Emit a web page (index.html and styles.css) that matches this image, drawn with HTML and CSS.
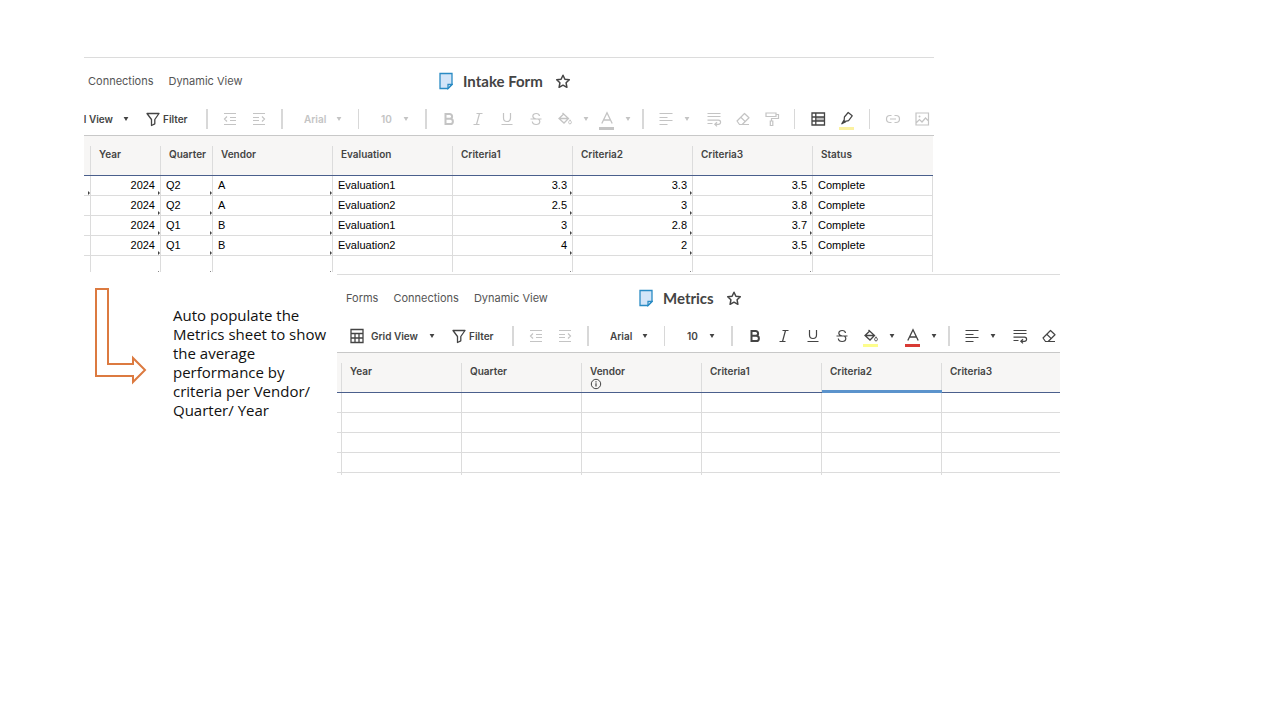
FILE: index.html
```html
<!DOCTYPE html>
<html lang="en">
<head>
<meta charset="utf-8">
<title>Intake Form and Metrics</title>
<link rel="stylesheet" href="styles.css">
</head>
<body>
<svg class="sprite" aria-hidden="true">
  <defs>
    <symbol id="caret" viewBox="0 0 6 5"><path d="M0 0h6L3 5z" fill="currentColor"/></symbol>
    <symbol id="sheet" viewBox="0 0 14 18"><path d="M1 1.500h12v11L9 16.500H1z" fill="#d3e5f8" stroke="#2a8bc4" stroke-width="1.300"/><path d="M13 12.500H9v4z" fill="#fff" stroke="#2a8bc4" stroke-width="1.300"/></symbol>
    <symbol id="star" viewBox="0 0 16 16"><path d="M8 2.200l1.900 4 4.400.6-3.200 3 .8 4.500L8 12.200l-3.900 2.100.8-4.500-3.200-3 4.400-.6z" fill="none" stroke="currentColor" stroke-width="1.500" stroke-linejoin="round"/></symbol>
    <symbol id="grid" viewBox="0 0 16 16"><path d="M2 1.500h12v13H2zM2 5.500h12M2 10h12M6 5.500v9M10 5.500v9" fill="none" stroke="currentColor" stroke-width="1.300"/></symbol>
    <symbol id="filter" viewBox="0 0 16 16"><path d="M2 2.500h12L9.800 8.500v4.300L6.500 14.500v-6z" fill="none" stroke="currentColor" stroke-width="1.300" stroke-linejoin="round"/></symbol>
    <symbol id="outdent" viewBox="0 0 16 16"><path d="M2 2.500h12M8 6.500h6M8 9.500h6M2 13.500h12M5 5.500L2.500 8 5 10.500" fill="none" stroke="currentColor" stroke-width="1.200"/></symbol>
    <symbol id="indent" viewBox="0 0 16 16"><path d="M2 2.500h12M2 6.500h6M2 9.500h6M2 13.500h12M11 5.500L13.500 8 11 10.500" fill="none" stroke="currentColor" stroke-width="1.200"/></symbol>
    <symbol id="bold" viewBox="0 0 16 16"><path d="M4.500 3h4.200a2.300 2.300 0 0 1 0 4.800H4.500zM4.500 7.800h4.800a2.600 2.600 0 0 1 0 5.200H4.500z" fill="none" stroke="currentColor" stroke-width="2"/></symbol>
    <symbol id="italic" viewBox="0 0 16 16"><path d="M6.500 2.500h6M3.500 13.500h6M9.500 2.500l-3 11" fill="none" stroke="currentColor" stroke-width="1.200"/></symbol>
    <symbol id="underline" viewBox="0 0 16 16"><path d="M4.500 2v5a3.500 3.500 0 0 0 7 0V2M2.500 13.500h11" fill="none" stroke="currentColor" stroke-width="1.200"/></symbol>
    <symbol id="strike" viewBox="0 0 16 16"><path d="M11.500 5C11.300 3.400 10 2.500 8.200 2.500 6.200 2.500 4.800 3.500 4.800 5.200c0 1.600 1.400 2.300 3.200 2.800M2.500 8h11M4.300 10.500c.2 1.900 1.700 3 3.800 3 2.200 0 3.700-1 3.700-2.900 0-1-.4-1.800-1.300-2.400" fill="none" stroke="currentColor" stroke-width="1.200"/></symbol>
    <symbol id="fill" viewBox="0 0 16 16"><path d="M5.500 2l6 5.500L7 12 2 7.500l4.500-4.300M2.300 7.500h9" fill="none" stroke="currentColor" stroke-width="1.300"/><path d="M13 8.800c2 2.600 1.700 4 0 4s-2-1.400 0-4z" fill="none" stroke="currentColor"/></symbol>
    <symbol id="textcolor" viewBox="0 0 16 16"><path d="M2.800 12.500L8 1.800l5.200 10.700M4.500 9h7" fill="none" stroke="currentColor" stroke-width="1.300"/></symbol>
    <symbol id="align" viewBox="0 0 16 16"><path d="M1.500 2.500h13M1.500 6.500h8M1.500 9.500h13M1.500 13.500h8" fill="none" stroke="currentColor" stroke-width="1.200"/></symbol>
    <symbol id="wrap" viewBox="0 0 16 16"><path d="M1.500 2.500h13M1.500 5.500h13M1.500 9.200h11a2 2 0 0 1 0 4.200H9M1.500 12.500h5M11 11.200L8.800 13.300 11 15.400" fill="none" stroke="currentColor" stroke-width="1.200"/></symbol>
    <symbol id="eraser" viewBox="0 0 16 16"><path d="M2 10l7.500-7.500 4.500 4.300-6.800 6.700H4.500zM5.800 6.300l4.500 4.300M4 13.500h10" fill="none" stroke="currentColor" stroke-width="1.200" stroke-linejoin="round"/></symbol>
    <symbol id="painter" viewBox="0 0 16 16"><path d="M2 2h10v3.500H2zM12 3.500h2.500v4H7.500V10M6.300 10h2.500v4.500H6.300z" fill="none" stroke="currentColor" stroke-width="1.200"/></symbol>
    <symbol id="rows" viewBox="0 0 16 16"><path d="M6 6h8v4H6z" fill="currentColor" opacity=".35"/><path d="M2 2h12.500v12H2zM2 6h12.500M2 10h12.500M5.800 2v12" fill="none" stroke="currentColor" stroke-width="1.300"/></symbol>
    <symbol id="marker" viewBox="0 0 16 16"><path d="M9.200 1.500l4 3.300-3.600 4.900-4.500 1 .300-4.700zM5.300 10.700L3 12.800M5.300 8.500L2.800 12.800l4-2" fill="none" stroke="currentColor" stroke-width="1.200" stroke-linejoin="round"/></symbol>
    <symbol id="link" viewBox="0 0 16 16"><path d="M6.500 4.500H5a3.500 3.500 0 0 0 0 7h1.500M9.500 4.500H11a3.500 3.500 0 0 1 0 7H9.500M5 8h6" fill="none" stroke="currentColor" stroke-width="1.200"/></symbol>
    <symbol id="image" viewBox="0 0 16 16"><path d="M2 2h12.500v12H2zM2 12l3.500-3.500L8 11l3.500-4 3 3" fill="none" stroke="currentColor" stroke-width="1.200"/><circle cx="5.500" cy="5.500" r="1" fill="currentColor"/></symbol>
    <symbol id="info" viewBox="0 0 12 12"><circle cx="6" cy="6" r="4.700" fill="none" stroke="currentColor"/><path d="M6 5.300v3.200M6 3.200v1.200" stroke="currentColor" stroke-width="1.200"/></symbol>
  </defs>
</svg>

<main class="slide">
  <section class="panel intake">
    <header class="menu">
      <nav class="tabs"><a href="#">Connections</a><a href="#">Dynamic View</a></nav>
      <h1 class="title"><svg class="sheet"><use href="#sheet"/></svg>Intake Form</h1>
      <button class="star" aria-label="Favorite"><svg class="icon"><use href="#star"/></svg></button>
    </header>
    <div class="toolbar off">
      <button class="view on"><span>l View</span><svg class="caret"><use href="#caret"/></svg></button>
      <button class="filter on"><svg class="icon"><use href="#filter"/></svg>Filter</button>
      <i class="rule thick"></i>
      <button class="tool" aria-label="Outdent"><svg class="icon"><use href="#outdent"/></svg></button>
      <button class="tool" aria-label="Indent"><svg class="icon"><use href="#indent"/></svg></button>
      <i class="rule thick"></i>
      <div class="picker font"><select aria-label="Font"><option>Arial</option></select><svg class="caret"><use href="#caret"/></svg></div>
      <i class="rule"></i>
      <div class="picker size"><select aria-label="Size"><option>10</option></select><svg class="caret"><use href="#caret"/></svg></div>
      <i class="rule thick"></i>
      <button class="tool" aria-label="Bold"><svg class="icon"><use href="#bold"/></svg></button>
      <button class="tool" aria-label="Italic"><svg class="icon"><use href="#italic"/></svg></button>
      <button class="tool" aria-label="Underline"><svg class="icon"><use href="#underline"/></svg></button>
      <button class="tool" aria-label="Strikethrough"><svg class="icon"><use href="#strike"/></svg></button>
      <button class="tool" aria-label="Fill color"><svg class="icon"><use href="#fill"/></svg></button>
      <button class="more" aria-label="Fill colors"><svg class="caret"><use href="#caret"/></svg></button>
      <button class="tool swatch grey" aria-label="Text color"><svg class="icon"><use href="#textcolor"/></svg></button>
      <button class="more" aria-label="Text colors"><svg class="caret"><use href="#caret"/></svg></button>
      <i class="rule thick"></i>
      <button class="tool" aria-label="Align"><svg class="icon"><use href="#align"/></svg></button>
      <button class="more wide" aria-label="Alignments"><svg class="caret"><use href="#caret"/></svg></button>
      <button class="tool" aria-label="Wrap text"><svg class="icon"><use href="#wrap"/></svg></button>
      <button class="tool" aria-label="Clear format"><svg class="icon"><use href="#eraser"/></svg></button>
      <button class="tool" aria-label="Format painter"><svg class="icon"><use href="#painter"/></svg></button>
      <i class="rule"></i>
      <button class="tool on" aria-label="Conditional formatting"><svg class="icon"><use href="#rows"/></svg></button>
      <button class="tool on swatch pale" aria-label="Highlight changes"><svg class="icon"><use href="#marker"/></svg></button>
      <i class="rule"></i>
      <button class="tool" aria-label="Link"><svg class="icon"><use href="#link"/></svg></button>
      <button class="tool" aria-label="Image"><svg class="icon"><use href="#image"/></svg></button>
    </div>
    <div class="sheetarea">
      <table class="grid-intake">
        <colgroup><col class="c-gutter"><col class="c-year"><col class="c-quarter"><col><col><col><col><col><col></colgroup>
        <thead><tr><th></th><th>Year</th><th>Quarter</th><th>Vendor</th><th>Evaluation</th><th>Criteria1</th><th>Criteria2</th><th>Criteria3</th><th class="last">Status</th></tr></thead>
        <tbody>
          <tr><td class="mark"></td><td class="num mark">2024</td><td class="mark">Q2</td><td class="mark">A</td><td>Evaluation1</td><td class="num mark">3.3</td><td class="num mark">3.3</td><td class="num mark">3.5</td><td>Complete</td></tr>
          <tr><td></td><td class="num mark">2024</td><td class="mark">Q2</td><td class="mark">A</td><td>Evaluation2</td><td class="num mark">2.5</td><td class="num mark">3</td><td class="num mark">3.8</td><td>Complete</td></tr>
          <tr><td></td><td class="num mark">2024</td><td class="mark">Q1</td><td class="mark">B</td><td>Evaluation1</td><td class="num mark">3</td><td class="num mark">2.8</td><td class="num mark">3.7</td><td>Complete</td></tr>
          <tr><td></td><td class="num mark">2024</td><td class="mark">Q1</td><td class="mark">B</td><td>Evaluation2</td><td class="num mark">4</td><td class="num mark">2</td><td class="num mark">3.5</td><td>Complete</td></tr>
          <tr class="cut"><td></td><td class="dot"></td><td class="dot"></td><td class="dot"></td><td></td><td class="dot"></td><td class="dot"></td><td class="dot"></td><td></td></tr>
        </tbody>
      </table>
    </div>
  </section>

  <div class="lower">
    <svg class="arrow" viewBox="0 0 54 98" aria-hidden="true"><path d="M2 2h12v75h25v-6l12 12-12 12v-6H2z"/></svg>
    <p class="note">Auto populate the Metrics sheet to show the average performance by criteria per Vendor/ Quarter/ Year</p>
    <section class="panel metrics">
      <header class="menu">
        <nav class="tabs"><a href="#">Forms</a><a href="#">Connections</a><a href="#">Dynamic View</a></nav>
        <h1 class="title"><svg class="sheet"><use href="#sheet"/></svg>Metrics</h1>
        <button class="star" aria-label="Favorite"><svg class="icon"><use href="#star"/></svg></button>
      </header>
      <div class="toolbar">
        <button class="view"><svg class="icon"><use href="#grid"/></svg><span>Grid View</span><svg class="caret"><use href="#caret"/></svg></button>
        <button class="filter"><svg class="icon"><use href="#filter"/></svg>Filter</button>
        <i class="rule thick"></i>
        <button class="tool dim" aria-label="Outdent"><svg class="icon"><use href="#outdent"/></svg></button>
        <button class="tool dim" aria-label="Indent"><svg class="icon"><use href="#indent"/></svg></button>
        <i class="rule thick"></i>
        <div class="picker font"><select aria-label="Font"><option>Arial</option></select><svg class="caret"><use href="#caret"/></svg></div>
        <i class="rule"></i>
        <div class="picker size"><select aria-label="Size"><option>10</option></select><svg class="caret"><use href="#caret"/></svg></div>
        <i class="rule thick"></i>
        <button class="tool" aria-label="Bold"><svg class="icon"><use href="#bold"/></svg></button>
        <button class="tool" aria-label="Italic"><svg class="icon"><use href="#italic"/></svg></button>
        <button class="tool" aria-label="Underline"><svg class="icon"><use href="#underline"/></svg></button>
        <button class="tool" aria-label="Strikethrough"><svg class="icon"><use href="#strike"/></svg></button>
        <button class="tool swatch yellow" aria-label="Fill color"><svg class="icon"><use href="#fill"/></svg></button>
        <button class="more" aria-label="Fill colors"><svg class="caret"><use href="#caret"/></svg></button>
        <button class="tool swatch red" aria-label="Text color"><svg class="icon"><use href="#textcolor"/></svg></button>
        <button class="more" aria-label="Text colors"><svg class="caret"><use href="#caret"/></svg></button>
        <i class="rule thick"></i>
        <button class="tool" aria-label="Align"><svg class="icon"><use href="#align"/></svg></button>
        <button class="more wide" aria-label="Alignments"><svg class="caret"><use href="#caret"/></svg></button>
        <button class="tool" aria-label="Wrap text"><svg class="icon"><use href="#wrap"/></svg></button>
        <button class="tool" aria-label="Clear format"><svg class="icon"><use href="#eraser"/></svg></button>
      </div>
      <div class="sheetarea">
        <table class="grid-metrics">
          <colgroup><col class="c-gutter"><col><col><col><col><col><col></colgroup>
          <thead><tr><th></th><th>Year</th><th>Quarter</th><th>Vendor<svg class="info"><use href="#info"/></svg></th><th>Criteria1</th><th class="selected">Criteria2</th><th class="last">Criteria3</th></tr></thead>
          <tbody>
            <tr><td></td><td></td><td></td><td></td><td></td><td></td><td></td></tr>
            <tr><td></td><td></td><td></td><td></td><td></td><td></td><td></td></tr>
            <tr><td></td><td></td><td></td><td></td><td></td><td></td><td></td></tr>
            <tr><td></td><td></td><td></td><td></td><td></td><td></td><td></td></tr>
            <tr class="cut"><td></td><td></td><td></td><td></td><td></td><td></td><td></td></tr>
          </tbody>
        </table>
      </div>
    </section>
  </div>
</main>
</body>
</html>
```
FILE: styles.css
```css
* { box-sizing: border-box; }

body {
  margin: 0;
  background: #fff;
  color: #444;
  font-family: Inter, "Liberation Sans", sans-serif;
}

.sprite { position: absolute; width: 0; height: 0; }

button {
  padding: 0;
  border: 0;
  background: none;
  color: inherit;
  font: inherit;
}

.slide { padding: 57px 0 0 84px; }

.panel {
  border-top: 1px solid #dcdcdc;
  overflow: hidden;
  max-width: 100%;
}
.intake { width: 850px; }
.metrics { width: 723px; margin-top: 2px; }

/* Menu row */
.menu {
  display: flex;
  align-items: center;
  height: 45px;
}
.tabs {
  display: flex;
  gap: 15px;
  font-size: 11px;
}
.intake .tabs { width: 355px; padding-left: 4px; }
.metrics .tabs { width: 302px; padding-left: 9px; }
.tabs a { color: #555; text-decoration: none; white-space: nowrap; }
.title {
  display: flex;
  align-items: center;
  gap: 10px;
  margin: 0;
  font-family: Lato, sans-serif;
  font-size: 15px;
  font-weight: 700;
  line-height: 18px;
  white-space: nowrap;
}
.sheet { width: 14px; height: 18px; }
.star { display: flex; margin-left: 12px; }
.icon { display: block; flex: none; width: 16px; height: 16px; }
.caret { display: block; flex: none; width: 6px; height: 4px; }

/* Toolbar */
.toolbar {
  display: flex;
  align-items: center;
  height: 32px;
  font-size: 10px;
  font-weight: 600;
}
.toolbar > * { flex: none; }
.off, .dim { color: #c4c4c4; }
.on { color: #444; }
.view {
  display: flex;
  align-items: center;
  justify-content: flex-end;
  white-space: nowrap;
}
.view span { margin: 0 11px 0 6px; }
.intake .view { width: 45px; margin-right: 16px; }
.intake .view span { margin: 0 10px 0 0; }
.metrics .view { width: 98px; margin-right: 16px; }
.filter {
  display: flex;
  align-items: center;
  gap: 2px;
  width: 53px;
}
.rule {
  width: 17px;
  height: 20px;
  background: linear-gradient(#d8d8d8, #d8d8d8) center / 1px 100% no-repeat;
}
.rule.thick { background-size: 2px 100%; }
.tool {
  display: flex;
  align-items: center;
  justify-content: center;
  width: 29px;
  height: 24px;
}
.more { display: flex; width: 13px; padding-left: 4px; }
.more.wide { width: 19px; }
.swatch { background: no-repeat center 20px / 15px 3px; }
.grey { background-image: linear-gradient(#c4c4c4, #c4c4c4); }
.pale { background-image: linear-gradient(#fbf1a0, #fbf1a0); }
.yellow { background-image: linear-gradient(#fdfd8c, #fdfd8c); }
.red { background-image: linear-gradient(#d83a34, #d83a34); }
.picker {
  display: flex;
  align-items: center;
  padding: 0 8px 0 14px;
}
.picker select {
  flex: 1;
  min-width: 0;
  padding: 0;
  border: 0;
  appearance: none;
  background: none;
  color: inherit;
  font: inherit;
}
.font { width: 60px; }
.size { width: 50px; }

/* Sheets */
.sheetarea { border-top: 1px solid #c8c8c8; }
table {
  border-spacing: 0;
  table-layout: fixed;
}
.grid-intake { width: 849px; }
.grid-metrics { width: 725px; }
.grid-intake .c-gutter { width: 7px; }
.grid-metrics .c-gutter { width: 5px; }
.c-year { width: 70px; }
.c-quarter { width: 52px; }
th {
  height: 40px;
  padding: 11px 0 0 8px;
  border-bottom: 1px solid #4a5f8c;
  background: #f7f6f5 linear-gradient(#dcdcdc, #dcdcdc) right 10px / 1px 100% no-repeat;
  font-size: 10px;
  font-weight: 600;
  line-height: 14px;
  text-align: left;
  vertical-align: top;
}
th:first-child { padding-left: 0; }
th.last { background-image: none; }
th.selected { border-bottom: 3px solid #5b93cc; }
.info { display: block; width: 12px; height: 12px; }
td {
  position: relative;
  height: 20px;
  padding: 0 5px;
  border-right: 1px solid #dcdcdc;
  border-bottom: 1px solid #dcdcdc;
  color: #000;
  font-family: "Liberation Sans", Arial, sans-serif;
  font-size: 11px;
  line-height: 19px;
  vertical-align: top;
}
td:first-child { padding: 0; }
.mark::after {
  content: "";
  position: absolute;
  right: 0;
  bottom: 0;
  border: 2px solid transparent;
  border-right-width: 0;
  border-left-color: #444;
}
.dot::after {
  content: "";
  position: absolute;
  right: 1px;
  bottom: 0;
  width: 1px;
  height: 1px;
  background: #888;
}
.num { text-align: right; }
.cut td { height: 16px; border-bottom: 0; line-height: 14px; }
.grid-metrics .cut td { height: 2px; line-height: 0; }
.grid-metrics td:last-child { border-right: 0; }

/* Arrow, note and second sheet */
.lower { display: flex; align-items: flex-start; }
.arrow {
  flex: none;
  width: 54px;
  height: 98px;
  margin: 15px 25px 0 10px;
}
.arrow path { fill: none; stroke: #dc7a40; stroke-width: 2; }
.note {
  flex: none;
  width: 160px;
  margin: 34px 4px 0 0;
  color: #111;
  font-family: "Open Sans", sans-serif;
  font-size: 15px;
  line-height: 19px;
}
```
